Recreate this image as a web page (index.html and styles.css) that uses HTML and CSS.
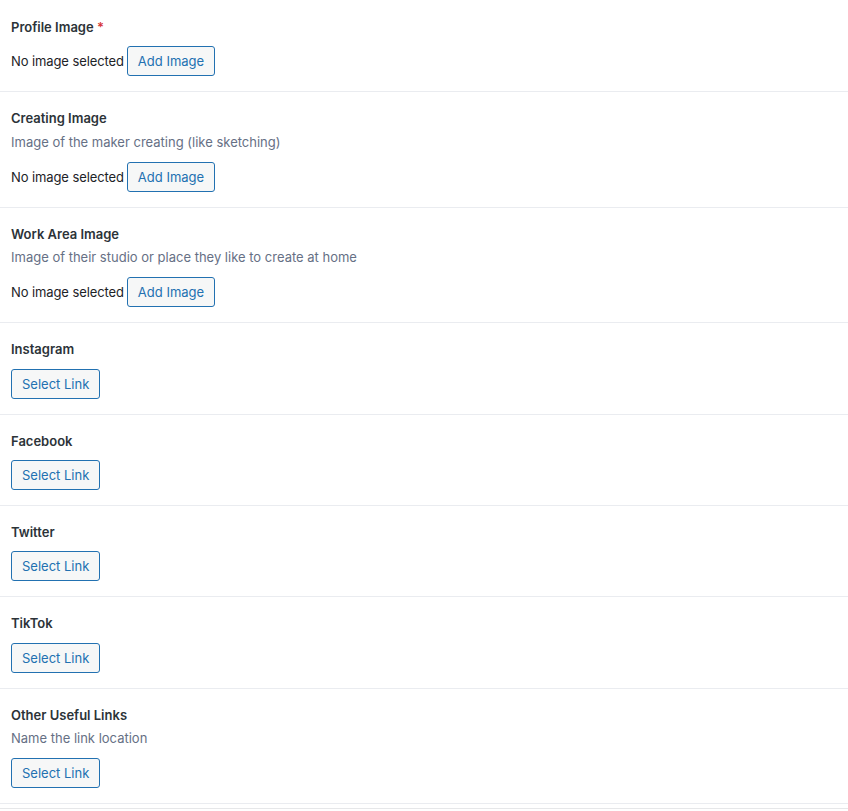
FILE: index.html
```html
<!DOCTYPE html>
<html>
<head>
<meta charset="utf-8">
<link rel="stylesheet" href="styles.css">
</head>
<body>
<div class="fields">
  <div class="field">
    <div class="label">Profile Image <span class="req">*</span></div>
    <div class="input"><span class="none">No image selected</span><button class="btn">Add Image</button></div>
  </div>
  <div class="field">
    <div class="label">Creating Image</div>
    <p class="desc">Image of the maker creating (like sketching)</p>
    <div class="input"><span class="none">No image selected</span><button class="btn">Add Image</button></div>
  </div>
  <div class="field">
    <div class="label">Work Area Image</div>
    <p class="desc">Image of their studio or place they like to create at home</p>
    <div class="input"><span class="none">No image selected</span><button class="btn">Add Image</button></div>
  </div>
  <div class="field">
    <div class="label">Instagram</div>
    <div class="input"><button class="btn">Select Link</button></div>
  </div>
  <div class="field">
    <div class="label">Facebook</div>
    <div class="input"><button class="btn">Select Link</button></div>
  </div>
  <div class="field">
    <div class="label">Twitter</div>
    <div class="input"><button class="btn">Select Link</button></div>
  </div>
  <div class="field">
    <div class="label">TikTok</div>
    <div class="input"><button class="btn">Select Link</button></div>
  </div>
  <div class="field">
    <div class="label">Other Useful Links</div>
    <p class="desc">Name the link location</p>
    <div class="input"><button class="btn">Select Link</button></div>
  </div>
  <div class="field last"></div>
</div>
</body>
</html>
```
FILE: styles.css
```css
html, body {
  margin: 0;
  padding: 0;
  background: #fff;
}
body {
  font-family: Inter, "Liberation Sans", sans-serif;
  font-size: 13px;
  color: #1d2327;
}
.fields {
  display: flex;
  flex-direction: column;
  padding-top: 1px;
}
.field {
  padding: 16px 12px 15px 11px;
  border-bottom: 1px solid #eaecf0;
}
.field.last {
  padding: 0;
  height: 4px;
  border-bottom: 1px solid #e6e7e9;
}
.label {
  font-size: 13px;
  font-weight: 600;
  line-height: 20.33px;
  color: #2c3338;
}
.req {
  color: #d63638;
}
.desc {
  margin: 3.17px 0 1px;
  font-size: 13px;
  line-height: 21px;
  color: #667085;
}
.input {
  margin-top: 9px;
  display: flex;
  align-items: center;
  gap: 3px;
}
.none {
  color: #1d2327;
  font-size: 13px;
  letter-spacing: -0.1px;
}
.btn {
  font-family: inherit;
  font-size: 13px;
  height: 30px;
  padding: 0 10px;
  background: #f6f7f7;
  color: #2271b1;
  border: 1px solid #2271b1;
  border-radius: 3px;
  cursor: pointer;
}
```
